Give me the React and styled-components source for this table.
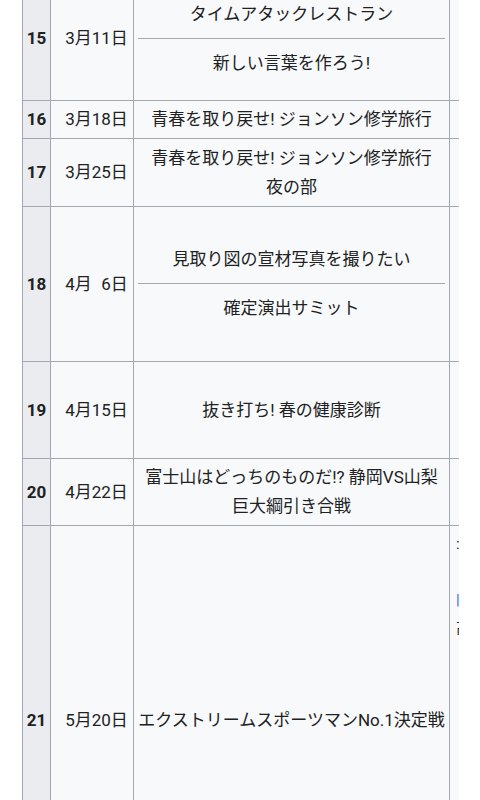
import React from "react";
import styled, { createGlobalStyle } from "styled-components";

const GlobalStyle = createGlobalStyle`
  html, body {
    margin: 0;
    padding: 0;
    background: #ffffff;
  }
  body {
    font-family: Roboto, "Noto Sans CJK JP", sans-serif;
    color: #202122;
  }
`;

const Scroller = styled.div`
  width: 437px;
  margin: -24px 0 0 22px;
  overflow: hidden;
`;

const Table = styled.table`
  border-collapse: collapse;
  table-layout: fixed;
  width: 640px;
  background: #f8f9fa;
  color: #202122;
  font-size: 17px;
  line-height: 29px;
`;

const Row = styled.tr`
  height: ${(p) => p.$h}px;
`;

const Num = styled.th`
  background: #eaecf0;
  border: 1px solid #a2a9b1;
  padding: 4px 0;
  font-weight: 700;
  text-align: center;
  vertical-align: middle;
`;

const DateCell = styled.td`
  border: 1px solid #a2a9b1;
  padding: 4px 0 4px 9px;
  text-align: center;
  vertical-align: middle;
  white-space: nowrap;
`;

const Pad = styled.span`
  visibility: hidden;
`;

const Title = styled.td`
  border: 1px solid #a2a9b1;
  padding: 4px;
  text-align: center;
  vertical-align: middle;
  white-space: nowrap;
`;

const Divider = styled.hr`
  border: 0;
  border-top: 1px solid #a2a9b1;
  margin: 9px 0 10px;
  height: 0;
`;

const Note = styled.td`
  border: 1px solid #a2a9b1;
  padding: 4px 6px;
  text-align: left;
  vertical-align: top;
  white-space: nowrap;
  font-size: 15px;
  line-height: 28px;
`;

const NoteLink = styled.span`
  color: #3366cc;
`;

const episodes = [
  {
    no: 15,
    date: ["3月11日"],
    titles: [["タイムアタックレストラン"], ["新しい言葉を作ろう!"]],
    h: 124,
    note: [],
  },
  {
    no: 16,
    date: ["3月18日"],
    titles: [["青春を取り戻せ! ジョンソン修学旅行"]],
    h: 38,
    note: [],
  },
  {
    no: 17,
    date: ["3月25日"],
    titles: [["青春を取り戻せ! ジョンソン修学旅行", "夜の部"]],
    h: 68,
    note: [],
  },
  {
    no: 18,
    date: ["4月", "6日"],
    titles: [["見取り図の宣材写真を撮りたい"], ["確定演出サミット"]],
    h: 155,
    note: [],
  },
  {
    no: 19,
    date: ["4月15日"],
    titles: [["抜き打ち! 春の健康診断"]],
    h: 97,
    note: [],
  },
  {
    no: 20,
    date: ["4月22日"],
    titles: [["富士山はどっちのものだ!? 静岡VS山梨", "巨大綱引き合戦"]],
    h: 67,
    note: [],
  },
  {
    no: 21,
    date: ["5月20日"],
    titles: [["エクストリームスポーツマンNo.1決定戦"]],
    h: 390,
    note: [":", "", "link", "高"],
  },
];

function DateText({ parts }) {
  if (parts.length === 1) return parts[0];
  return (
    <>
      {parts[0]}
      <Pad>0</Pad>
      {parts[1]}
    </>
  );
}

function TitleLines({ lines }) {
  return lines.map((line, i) => (
    <React.Fragment key={i}>
      {i > 0 && <br />}
      {line}
    </React.Fragment>
  ));
}

export default function App() {
  return (
    <>
      <GlobalStyle />
      <Scroller>
        <Table>
          <colgroup>
            <col style={{ width: 28 }} />
            <col style={{ width: 83 }} />
            <col style={{ width: 316 }} />
            <col style={{ width: 213 }} />
          </colgroup>
          <tbody>
            {episodes.map((ep) => (
              <Row key={ep.no} $h={ep.h}>
                <Num>{ep.no}</Num>
                <DateCell>
                  <DateText parts={ep.date} />
                </DateCell>
                <Title>
                  {ep.titles.map((t, i) => (
                    <React.Fragment key={i}>
                      {i > 0 && <Divider />}
                      <TitleLines lines={t} />
                    </React.Fragment>
                  ))}
                </Title>
                <Note>
                  {ep.note.map((n, i) => (
                    <div key={i}>
                      {n === "link" ? <NoteLink>|</NoteLink> : n || "\u00a0"}
                    </div>
                  ))}
                </Note>
              </Row>
            ))}
          </tbody>
        </Table>
      </Scroller>
    </>
  );
}
